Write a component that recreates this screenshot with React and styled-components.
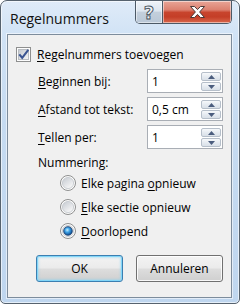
import React from 'react';
import styled, { createGlobalStyle } from 'styled-components';

const GlobalStyle = createGlobalStyle`
  html, body { margin: 0; padding: 0; background: #ffffff; }
  body { font-family: "Open Sans", "Noto Sans", sans-serif; color: #000; }
`;

const Window = styled.div`
  box-sizing: border-box;
  width: 240px;
  height: 304px;
  display: flex;
  flex-direction: column;
  border: 1px solid #56626e;
  border-radius: 7px 7px 5px 5px;
  background: linear-gradient(180deg, #dfebf8 0%, #d0e2f5 12%, #c6dbf1 40%, #bfd6ef 100%);
  box-shadow: inset 0 0 0 1px rgba(255, 255, 255, 0.6);
  overflow: hidden;
`;

const TitleBar = styled.div`
  height: 33px;
  flex-shrink: 0;
  display: flex;
  align-items: flex-start;
  justify-content: space-between;
  padding: 0 7px 0 9px;
`;

const Title = styled.span`
  font-size: 14px;
  line-height: 20px;
  margin-top: 8px;
  color: #111;
`;

const CaptionGroup = styled.div`
  display: flex;
  height: 22px;
  border: 1px solid #4c5966;
  border-top: none;
  border-radius: 0 0 5px 5px;
  overflow: hidden;
`;

const CaptionButton = styled.div`
  width: ${p => p.$w}px;
  display: flex;
  align-items: center;
  justify-content: center;
  background: ${p => p.$close
    ? 'linear-gradient(180deg, #e8a597 0%, #dc8170 40%, #c8442d 52%, #c43e27 72%, #d9674c 100%)'
    : 'linear-gradient(180deg, #eef3f8 0%, #dde6ef 45%, #c3cfdc 52%, #b9c7d6 100%)'};
  box-shadow: inset 0 0 0 1px rgba(255, 255, 255, 0.5);
  & + & { border-left: 1px solid #4c5966; }
`;

const HelpGlyph = styled.span`
  font-family: "DejaVu Sans", sans-serif;
  font-weight: bold;
  font-size: 18px;
  line-height: 18px;
  margin-top: 1px;
  color: #eef2f6;
  -webkit-text-stroke: 0.9px #46505b;
`;

const Client = styled.div`
  flex: 1;
  margin: 0 7px 5px 6px;
  border: 1px solid #7d8c9c;
  background: #f0f0f0;
  box-shadow: 0 0 0 1px rgba(255, 255, 255, 0.55);
  padding: 12px 8px 0 8px;
  display: flex;
  flex-direction: column;
  font-size: 12px;
`;

const CheckRow = styled.label`
  display: flex;
  align-items: center;
  gap: 6px;
  height: 15px;
  line-height: 15px;
`;

const U = styled.span`
  text-decoration: underline;
  text-underline-offset: 2px;
`;

const SpinList = styled.div`
  display: grid;
  grid-template-columns: 1fr 76px;
  grid-auto-rows: 24px;
  row-gap: 4px;
  align-items: center;
  margin-top: 7px;
  padding-left: 22px;
`;

const SpinBox = styled.div`
  box-sizing: border-box;
  height: 24px;
  border: 1px solid #a9aeb5;
  background: #fff;
  display: flex;
  align-items: center;
  padding: 2px 1px 1px 4px;
`;

const SpinValue = styled.span`
  flex: 1;
  line-height: 18px;
`;

const SpinButtons = styled.div`
  width: 20px;
  align-self: stretch;
  display: flex;
  flex-direction: column;
  gap: 1px;
`;

const SpinButton = styled.div`
  flex: 1;
  box-sizing: border-box;
  border: 1px solid #b6bfca;
  border-radius: 2px;
  background: linear-gradient(180deg, #f7f9fb 0%, #e6ebf1 50%, #d9e0e8 100%);
  display: flex;
  align-items: center;
  justify-content: center;
`;

const SectionLabel = styled.div`
  margin-top: 6px;
  height: 16px;
  line-height: 16px;
  padding-left: 22px;
`;

const RadioList = styled.div`
  display: flex;
  flex-direction: column;
  padding-left: 44px;
`;

const RadioRow = styled.label`
  height: 24px;
  display: flex;
  align-items: center;
  gap: 5px;
`;

const ButtonRow = styled.div`
  margin-top: 12px;
  display: flex;
  justify-content: flex-end;
  gap: 13px;
`;

const Button = styled.button`
  box-sizing: border-box;
  width: 87px;
  height: 27px;
  padding: 0;
  border-radius: 3px;
  border: 1px solid ${p => (p.$default ? '#3c7fb1' : '#707070')};
  background: linear-gradient(180deg, #f3f3f3 0%, #ebebeb 48%, #dddddd 52%, #cfcfcf 100%);
  box-shadow: ${p => (p.$default
    ? 'inset 0 0 0 1px #82d6f8, inset 0 0 2px 2px rgba(130, 210, 245, 0.45)'
    : 'inset 0 0 0 1px rgba(255, 255, 255, 0.85)')};
  font-family: "Open Sans", "Noto Sans", sans-serif;
  font-size: 12px;
  color: #000;
`;

const Arrow = ({ up }) => (
  <svg width="7" height="4" viewBox="0 0 7 4">
    <polygon points={up ? '0,4 7,4 3.5,0' : '0,0 7,0 3.5,4'} fill="#4b5d7e" />
  </svg>
);

const CloseIcon = () => (
  <svg width="15" height="12" viewBox="0 0 15 12">
    <polygon
      points="0.5,0.5 4.5,0.5 7.5,3.6 10.5,0.5 14.5,0.5 9.6,6 14.5,11.5 10.5,11.5 7.5,8.4 4.5,11.5 0.5,11.5 5.4,6"
      fill="#ffffff"
      stroke="#4a3a38"
      strokeWidth="1"
      strokeLinejoin="round"
    />
  </svg>
);

const CheckIcon = () => (
  <svg width="15" height="15" viewBox="0 0 15 15">
    <defs>
      <linearGradient id="cbg" x1="0" y1="0" x2="1" y2="1">
        <stop offset="0" stopColor="#c3c8cf" />
        <stop offset="1" stopColor="#f6f6f6" />
      </linearGradient>
    </defs>
    <rect x="0.5" y="0.5" width="14" height="14" fill="#fdfdfd" stroke="#8e8f8f" />
    <rect x="2.5" y="2.5" width="10" height="10" fill="url(#cbg)" stroke="#b9bdc2" />
    <path d="M3.3 7.4 L6.2 10.8 L12.3 2.9" fill="none" stroke="#3b5592" strokeWidth="2.1" strokeLinejoin="miter" />
  </svg>
);

const RadioIcon = ({ checked }) => (
  <svg width="16" height="16" viewBox="0 0 16 16">
    <defs>
      <linearGradient id="rbg" x1="0" y1="0" x2="0.7" y2="1">
        <stop offset="0" stopColor="#c4c9d0" />
        <stop offset="1" stopColor="#f8f8f8" />
      </linearGradient>
      <radialGradient id="rdot" cx="0.42" cy="0.38" r="0.6">
        <stop offset="0" stopColor="#c4f0ff" />
        <stop offset="0.45" stopColor="#3ea2e6" />
        <stop offset="1" stopColor="#0f4f93" />
      </radialGradient>
    </defs>
    <circle cx="8" cy="8" r="7.5" fill="#fbfbfb" stroke="#8e8f8f" />
    <circle cx="8" cy="8" r="5.6" fill="url(#rbg)" stroke="#c2c6cb" strokeWidth="0.8" />
    {checked && <circle cx="8" cy="8" r="4.3" fill="url(#rdot)" stroke="#1b3f70" strokeWidth="0.8" />}
  </svg>
);

const Spin = ({ value }) => (
  <SpinBox>
    <SpinValue>{value}</SpinValue>
    <SpinButtons>
      <SpinButton><Arrow up /></SpinButton>
      <SpinButton><Arrow /></SpinButton>
    </SpinButtons>
  </SpinBox>
);

export default function App() {
  return (
    <>
      <GlobalStyle />
      <Window>
        <TitleBar>
          <Title>Regelnummers</Title>
          <CaptionGroup>
            <CaptionButton $w={26}><HelpGlyph>?</HelpGlyph></CaptionButton>
            <CaptionButton $w={68} $close><CloseIcon /></CaptionButton>
          </CaptionGroup>
        </TitleBar>
        <Client>
          <CheckRow>
            <CheckIcon />
            <span><U>R</U>egelnummers toevoegen</span>
          </CheckRow>
          <SpinList>
            <span><U>B</U>eginnen bij:</span>
            <Spin value="1" />
            <span><U>A</U>fstand tot tekst:</span>
            <Spin value="0,5 cm" />
            <span><U>T</U>ellen per:</span>
            <Spin value="1" />
          </SpinList>
          <SectionLabel>Nummering:</SectionLabel>
          <RadioList>
            <RadioRow><RadioIcon /><span>Elke pagina <U>o</U>pnieuw</span></RadioRow>
            <RadioRow><RadioIcon /><span><U>E</U>lke sectie opnieuw</span></RadioRow>
            <RadioRow><RadioIcon checked /><span><U>D</U>oorlopend</span></RadioRow>
          </RadioList>
          <ButtonRow>
            <Button $default>OK</Button>
            <Button>Annuleren</Button>
          </ButtonRow>
        </Client>
      </Window>
    </>
  );
}
